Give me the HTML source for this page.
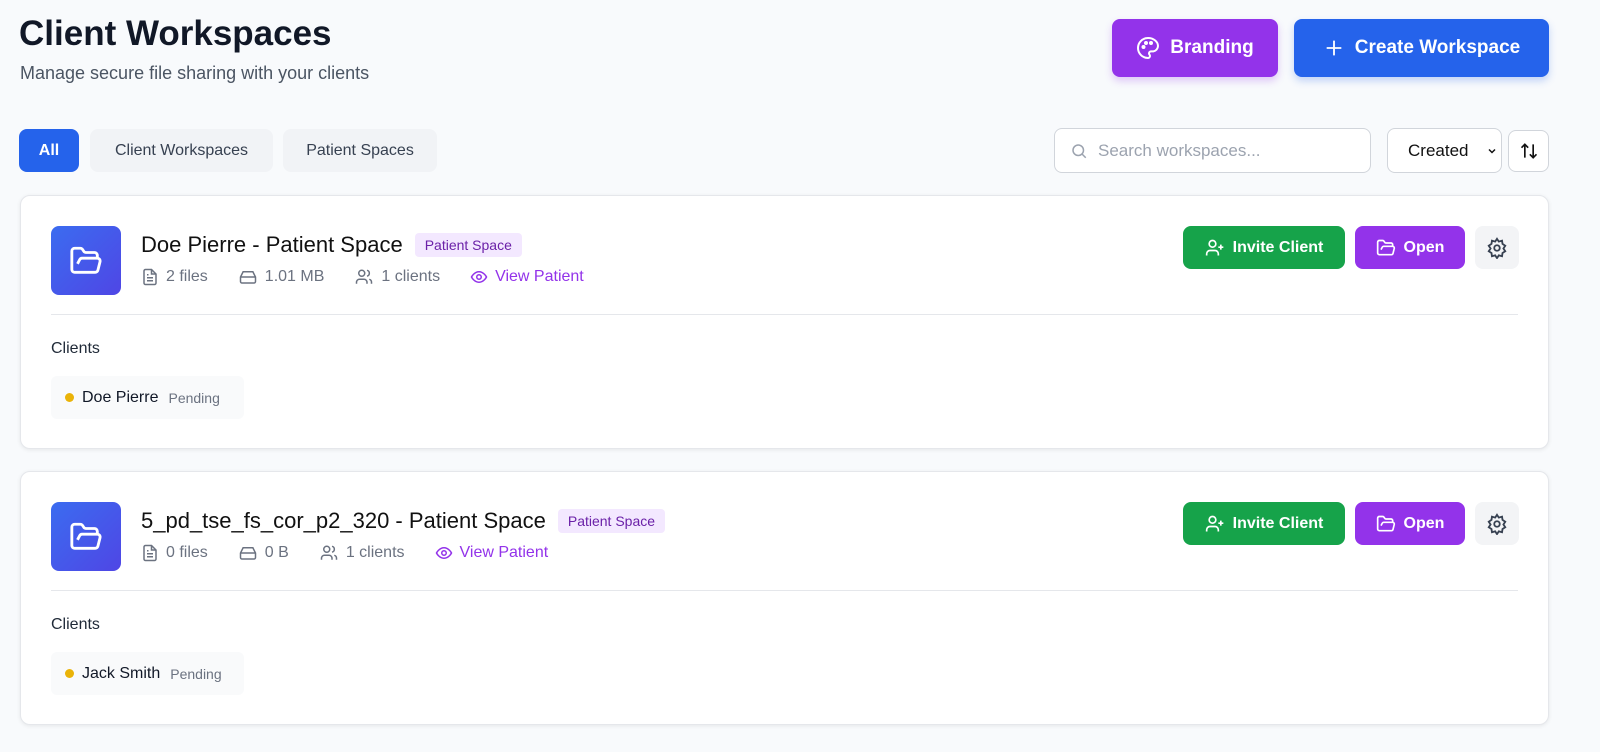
<!DOCTYPE html>
<html><head><style>
*{box-sizing:border-box;margin:0;padding:0}
body{width:1600px;height:752px;background:#f8fafc;font-family:"Liberation Sans",sans-serif;position:relative;overflow:hidden;color:#111827}
.a{position:absolute}
.btn{position:absolute;display:flex;align-items:center;justify-content:center;gap:10px;color:#fff;font-weight:bold;border-radius:8px}
.tab{position:absolute;top:129px;height:43px;border-radius:8px;background:#f1f3f6;color:#374151;font-size:16px;display:flex;align-items:center;justify-content:center}
.card{position:absolute;left:20px;width:1529px;height:254px;background:#fff;border:1px solid #e5e7eb;border-radius:10px;box-shadow:0 1px 4px rgba(0,0,0,.08)}
.ic{position:absolute;left:30px;top:30px;width:70px;height:69px;border-radius:8px;background:linear-gradient(135deg,#3b6cf0,#4f46e5);display:flex;align-items:center;justify-content:center}
.tt{position:absolute;left:120px;top:36px;font-size:22px;color:#111;display:flex;align-items:center;gap:12px}
.badge{font-size:14px;background:#f3e8ff;color:#6b21a8;padding:4px 10px;border-radius:4px}
.meta{position:absolute;left:120px;top:72px;font-size:16px;color:#6b7280;display:flex;gap:30px;align-items:center}
.meta span{display:flex;align-items:center;gap:7px}
.div{position:absolute;left:30px;right:30px;top:118px;border-top:1px solid #e5e7eb}
.cl{position:absolute;left:30px;top:144px;font-size:16px;color:#1f2937}
.chip{position:absolute;left:30px;top:180px;height:43px;width:193px;background:#f9fafb;border-radius:6px;display:flex;align-items:center;padding-left:14px;gap:8px;font-size:16px}
.dot{width:9px;height:9px;border-radius:50%;background:#eab308}
.chip small{font-size:14px;color:#6b7280;margin-left:2px}
.inv{left:1162px;top:30px;width:162px;height:43px;background:#16a34a;font-size:16px;gap:8px}
.opn{left:1334px;top:30px;width:110px;height:43px;background:#9333ea;font-size:16px;gap:8px}
.gear{position:absolute;left:1454px;top:30px;width:44px;height:43px;background:#f3f4f6;border-radius:8px;display:flex;align-items:center;justify-content:center}
svg{flex:none}
</style></head><body>
<div class="a" style="left:19px;top:14px;font-size:35px;font-weight:bold;color:#111827">Client Workspaces</div>
<div class="a" style="left:20px;top:63px;font-size:18px;color:#4b5563">Manage secure file sharing with your clients</div>
<div class="btn" style="left:1112px;top:19px;width:166px;height:58px;background:#9333ea;font-size:19px;box-shadow:0 4px 8px rgba(147,51,234,.25)">
<svg width="24" height="24" viewBox="0 0 24 24" fill="none" stroke="#fff" stroke-width="2"><path d="M12 2a10 10 0 0 0 0 20c1.1 0 2-.9 2-2 0-.5-.2-1-.5-1.3-.3-.4-.5-.8-.5-1.3 0-1.1.9-2 2-2h2.4A5.6 5.6 0 0 0 22 10C22 5.6 17.5 2 12 2z"/><circle cx="7.5" cy="11" r="1"/><circle cx="10" cy="7" r="1"/><circle cx="15" cy="7" r="1"/></svg>Branding</div>
<div class="btn" style="left:1294px;top:19px;width:255px;height:58px;background:#2563eb;font-size:19px;box-shadow:0 4px 8px rgba(37,99,235,.25)">
<svg width="22" height="22" viewBox="0 0 24 24" stroke="#fff" stroke-width="2"><path d="M12 4v16M4 12h16"/></svg>Create Workspace</div>
<div class="tab" style="left:19px;width:60px;background:#2563eb;color:#fff;font-weight:bold">All</div>
<div class="tab" style="left:90px;width:183px">Client Workspaces</div>
<div class="tab" style="left:283px;width:154px">Patient Spaces</div>
<div class="a" style="left:1054px;top:128px;width:317px;height:45px;background:#fff;border:1px solid #d1d5db;border-radius:8px;display:flex;align-items:center;padding-left:15px;gap:10px;color:#9ca3af;font-size:17px">
<svg width="18" height="18" viewBox="0 0 24 24" fill="none" stroke="#9ca3af" stroke-width="2"><circle cx="11" cy="11" r="7"/><path d="M21 21l-5-5"/></svg>Search workspaces...</div>
<div class="a" style="left:1387px;top:128px;width:115px;height:45px;background:#fff;border:1px solid #d1d5db;border-radius:8px;display:flex;align-items:center;padding-left:20px;font-size:17px;color:#111">Created<svg style="margin-left:18px" width="12" height="12" viewBox="0 0 24 24" fill="none" stroke="#111" stroke-width="3"><path d="M6 9l6 6 6-6"/></svg></div>
<div class="a" style="left:1508px;top:130px;width:41px;height:42px;background:#fff;border:1px solid #d1d5db;border-radius:8px;display:flex;align-items:center;justify-content:center">
<svg width="20" height="20" viewBox="0 0 24 24" fill="none" stroke="#111" stroke-width="2"><path d="M7 20V4M3 8l4-4 4 4M17 4v16M13 16l4 4 4-4"/></svg></div>

<!-- cards -->
<div class="card" style="top:195px">
<div class="ic"><svg width="34" height="34" viewBox="0 0 24 24" fill="none" stroke="#fff" stroke-width="2" stroke-linejoin="round"><path d="M6 14l1.5-2.9A2 2 0 0 1 9.2 10H20a2 2 0 0 1 1.9 2.5l-1.5 6a2 2 0 0 1-2 1.5H4a2 2 0 0 1-2-2V5a2 2 0 0 1 2-2h3.9a2 2 0 0 1 1.7.9l.8 1.2a2 2 0 0 0 1.7.9H18a2 2 0 0 1 2 2v2"/></svg></div>
<div class="tt">Doe Pierre - Patient Space<span class="badge">Patient Space</span></div>
<div class="meta"><span><svg width="18" height="18" viewBox="0 0 24 24" fill="none" stroke="#6b7280" stroke-width="2"><path d="M14 2H6a2 2 0 0 0-2 2v16a2 2 0 0 0 2 2h12a2 2 0 0 0 2-2V8z"/><path d="M14 2v6h6M8 13h8M8 17h8M8 9h2"/></svg>2 files</span><span><svg width="20" height="18" viewBox="0 0 24 24" fill="none" stroke="#6b7280" stroke-width="2"><path d="M22 12H2M5.5 5h13L22 12v6a2 2 0 0 1-2 2H4a2 2 0 0 1-2-2v-6zM6 16h.01M10 16h.01"/></svg>1.01 MB</span><span><svg width="20" height="18" viewBox="0 0 24 24" fill="none" stroke="#6b7280" stroke-width="2"><circle cx="9" cy="7" r="4"/><path d="M16 21v-2a4 4 0 0 0-4-4H6a4 4 0 0 0-4 4v2M16 3.1a4 4 0 0 1 0 7.8M22 21v-2a4 4 0 0 0-3-3.9"/></svg>1 clients</span><span style="color:#9333ea"><svg width="18" height="18" viewBox="0 0 24 24" fill="none" stroke="#9333ea" stroke-width="2"><path d="M2 12s3.5-7 10-7 10 7 10 7-3.5 7-10 7S2 12 2 12z"/><circle cx="12" cy="12" r="3"/></svg>View Patient</span></div>
<div class="btn inv"><svg width="20" height="20" viewBox="0 0 24 24" fill="none" stroke="#fff" stroke-width="2"><circle cx="9" cy="7" r="4"/><path d="M16 21v-2a4 4 0 0 0-4-4H6a4 4 0 0 0-4 4v2M19 8v6M22 11h-6"/></svg>Invite Client</div><div class="btn opn"><svg width="20" height="20" viewBox="0 0 24 24" fill="none" stroke="#fff" stroke-width="2" stroke-linejoin="round"><path d="M6 14l1.5-2.9A2 2 0 0 1 9.2 10H20a2 2 0 0 1 1.9 2.5l-1.5 6a2 2 0 0 1-2 1.5H4a2 2 0 0 1-2-2V5a2 2 0 0 1 2-2h3.9a2 2 0 0 1 1.7.9l.8 1.2a2 2 0 0 0 1.7.9H18a2 2 0 0 1 2 2v2"/></svg>Open</div><div class="gear"><svg width="22" height="22" viewBox="0 0 24 24" fill="none" stroke="#374151" stroke-width="2"><circle cx="12" cy="12" r="3"/><path d="M12 2l2 3 3.5-1 .5 3.5 3 2-2 3 2 3-3 2-.5 3.5-3.5-1-2 3-2-3-3.5 1-.5-3.5-3-2 2-3-2-3 3-2 .5-3.5 3.5 1z"/></svg></div>
<div class="div"></div><div class="cl">Clients</div>
<div class="chip"><span class="dot"></span>Doe Pierre <small>Pending</small></div>
</div>
<div class="card" style="top:471px">
<div class="ic"><svg width="34" height="34" viewBox="0 0 24 24" fill="none" stroke="#fff" stroke-width="2" stroke-linejoin="round"><path d="M6 14l1.5-2.9A2 2 0 0 1 9.2 10H20a2 2 0 0 1 1.9 2.5l-1.5 6a2 2 0 0 1-2 1.5H4a2 2 0 0 1-2-2V5a2 2 0 0 1 2-2h3.9a2 2 0 0 1 1.7.9l.8 1.2a2 2 0 0 0 1.7.9H18a2 2 0 0 1 2 2v2"/></svg></div>
<div class="tt">5_pd_tse_fs_cor_p2_320 - Patient Space<span class="badge">Patient Space</span></div>
<div class="meta"><span><svg width="18" height="18" viewBox="0 0 24 24" fill="none" stroke="#6b7280" stroke-width="2"><path d="M14 2H6a2 2 0 0 0-2 2v16a2 2 0 0 0 2 2h12a2 2 0 0 0 2-2V8z"/><path d="M14 2v6h6M8 13h8M8 17h8M8 9h2"/></svg>0 files</span><span><svg width="20" height="18" viewBox="0 0 24 24" fill="none" stroke="#6b7280" stroke-width="2"><path d="M22 12H2M5.5 5h13L22 12v6a2 2 0 0 1-2 2H4a2 2 0 0 1-2-2v-6zM6 16h.01M10 16h.01"/></svg>0 B</span><span><svg width="20" height="18" viewBox="0 0 24 24" fill="none" stroke="#6b7280" stroke-width="2"><circle cx="9" cy="7" r="4"/><path d="M16 21v-2a4 4 0 0 0-4-4H6a4 4 0 0 0-4 4v2M16 3.1a4 4 0 0 1 0 7.8M22 21v-2a4 4 0 0 0-3-3.9"/></svg>1 clients</span><span style="color:#9333ea"><svg width="18" height="18" viewBox="0 0 24 24" fill="none" stroke="#9333ea" stroke-width="2"><path d="M2 12s3.5-7 10-7 10 7 10 7-3.5 7-10 7S2 12 2 12z"/><circle cx="12" cy="12" r="3"/></svg>View Patient</span></div>
<div class="btn inv"><svg width="20" height="20" viewBox="0 0 24 24" fill="none" stroke="#fff" stroke-width="2"><circle cx="9" cy="7" r="4"/><path d="M16 21v-2a4 4 0 0 0-4-4H6a4 4 0 0 0-4 4v2M19 8v6M22 11h-6"/></svg>Invite Client</div><div class="btn opn"><svg width="20" height="20" viewBox="0 0 24 24" fill="none" stroke="#fff" stroke-width="2" stroke-linejoin="round"><path d="M6 14l1.5-2.9A2 2 0 0 1 9.2 10H20a2 2 0 0 1 1.9 2.5l-1.5 6a2 2 0 0 1-2 1.5H4a2 2 0 0 1-2-2V5a2 2 0 0 1 2-2h3.9a2 2 0 0 1 1.7.9l.8 1.2a2 2 0 0 0 1.7.9H18a2 2 0 0 1 2 2v2"/></svg>Open</div><div class="gear"><svg width="22" height="22" viewBox="0 0 24 24" fill="none" stroke="#374151" stroke-width="2"><circle cx="12" cy="12" r="3"/><path d="M12 2l2 3 3.5-1 .5 3.5 3 2-2 3 2 3-3 2-.5 3.5-3.5-1-2 3-2-3-3.5 1-.5-3.5-3-2 2-3-2-3 3-2 .5-3.5 3.5 1z"/></svg></div>
<div class="div"></div><div class="cl">Clients</div>
<div class="chip"><span class="dot"></span>Jack Smith <small>Pending</small></div>
</div>
</body></html>
